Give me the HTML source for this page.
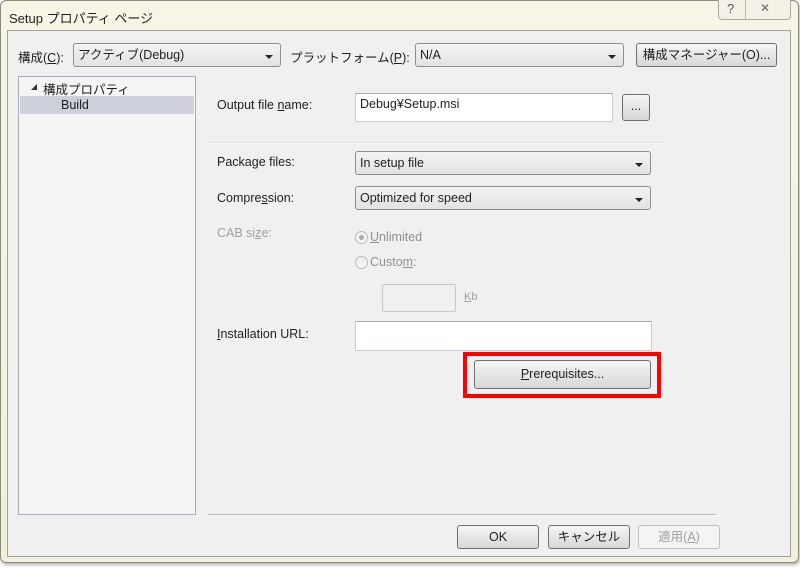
<!DOCTYPE html>
<html><head><meta charset="utf-8"><style>
*{box-sizing:border-box;margin:0;padding:0}
body{width:800px;height:568px;background:#fff;position:relative;overflow:hidden;font-family:"Liberation Sans","Noto Sans CJK JP",sans-serif;font-size:12.5px;color:#1e1e1e}
.a{position:absolute}
.frame{left:0;top:0;width:799px;height:563px;border:1px solid #8a8a80;border-radius:6px;background:linear-gradient(#f7f5e6,#f2f0dc);box-shadow:1px 2px 3px rgba(0,0,0,.3)}
.panel{left:7px;top:30px;width:784px;height:527px;background:#f0f0f0;border:1px solid #a0a0a0}
.combo{background:linear-gradient(#f4f4f4,#e2e2e2);border:1px solid #8e8e8e;border-radius:3px;padding:3px 4px;line-height:16px}
.combo:after{content:"";position:absolute;right:7px;top:11px;border-left:4px solid transparent;border-right:4px solid transparent;border-top:4px solid #222}
.btn{background:linear-gradient(#f6f6f6 0%,#e6e6e6 50%,#d8d8d8 100%);border:1px solid #707070;border-radius:3px;text-align:center;line-height:22px}
.tb{background:#fff;border:1px solid #c8cdd4;border-top-color:#abadb3;padding:5px 4px}
.gray{color:#a0a0a0}
u{text-decoration:underline}
.radio{width:13px;height:13px;border-radius:50%;border:1px solid #bbb;background:linear-gradient(#eee,#f8f8f8)}
</style></head><body>
<div class="a frame"></div>
<div class="a" style="left:9px;top:8px;font-size:13px">Setup プロパティ ページ</div>
<div class="a" style="left:718px;top:0;width:73px;height:20px;border:1px solid #a8a8a0;border-top:none;border-radius:0 0 4px 4px;background:#f4f2e6"></div>
<div class="a" style="left:745px;top:0;width:1px;height:20px;background:#b8b8b0"></div>
<div class="a" style="left:727px;top:1px;font-size:13px;color:#555">?</div>
<div class="a" style="left:760px;top:1px;font-size:12px;color:#666">✕</div>
<div class="a panel"></div>

<div class="a" style="left:18px;top:47px">構成(<u>C</u>):</div>
<div class="a combo" style="left:73px;top:43px;width:208px;height:24px">アクティブ(Debug)</div>
<div class="a" style="left:290px;top:47px">プラットフォーム(<u>P</u>):</div>
<div class="a combo" style="left:415px;top:43px;width:209px;height:24px">N/A</div>
<div class="a btn" style="left:636px;top:43px;width:141px;height:24px">構成マネージャー(O)...</div>

<div class="a" style="left:18px;top:76px;width:178px;height:439px;background:#f5f5f5;border:1px solid #a8acb4"></div>
<div class="a" style="left:31px;top:84px;width:0;height:0;border-left:6px solid transparent;border-bottom:6px solid #333"></div>
<div class="a" style="left:43px;top:79px">構成プロパティ</div>
<div class="a" style="left:20px;top:96px;width:174px;height:18px;background:#cdd0da"></div>
<div class="a" style="left:61px;top:98px">Build</div>

<div class="a" style="left:217px;top:98px">Output file <u>n</u>ame:</div>
<div class="a tb" style="left:355px;top:93px;width:258px;height:29px;padding-top:3px">Debug¥Setup.msi</div>
<div class="a btn" style="left:622px;top:94px;width:28px;height:27px;line-height:22px">...</div>
<div class="a" style="left:208px;top:142px;width:455px;height:2px;background:#fafafa;border-top:1px solid #e2e2e2"></div>

<div class="a" style="left:217px;top:155px">Package files:</div>
<div class="a combo" style="left:355px;top:151px;width:296px;height:24px">In setup file</div>
<div class="a" style="left:217px;top:191px">Compre<u>s</u>sion:</div>
<div class="a combo" style="left:355px;top:186px;width:296px;height:24px">Optimized for speed</div>
<div class="a gray" style="left:217px;top:226px">CAB si<u>z</u>e:</div>
<div class="a radio" style="left:355px;top:231px"></div>
<div class="a" style="left:359px;top:235px;width:5px;height:5px;border-radius:50%;background:#aaa"></div>
<div class="a gray" style="left:370px;top:230px;color:#909090"><u>U</u>nlimited</div>
<div class="a radio" style="left:355px;top:256px"></div>
<div class="a gray" style="left:370px;top:255px;color:#909090">Custo<u>m</u>:</div>
<div class="a" style="left:382px;top:284px;width:74px;height:28px;border:1px solid #c8c8c8;background:#f0f0f0;border-radius:2px"></div>
<div class="a gray" style="left:464px;top:291px;font-size:11px"><u>K</u>b</div>

<div class="a" style="left:217px;top:327px"><u>I</u>nstallation URL:</div>
<div class="a tb" style="left:355px;top:321px;width:297px;height:30px"></div>
<div class="a" style="left:463px;top:352px;width:198px;height:46px;border:4px solid #ff0000"></div>
<div class="a btn" style="left:474px;top:360px;width:177px;height:29px;line-height:27px"><u>P</u>rerequisites...</div>

<div class="a" style="left:208px;top:514px;width:508px;height:2px;background:#fafafa;border-top:1px solid #b8b8b8"></div>
<div class="a btn" style="left:457px;top:525px;width:82px;height:24px">OK</div>
<div class="a btn" style="left:548px;top:525px;width:82px;height:24px">キャンセル</div>
<div class="a btn gray" style="left:638px;top:525px;width:82px;height:24px;background:#f4f4f4;border-color:#c0c0c0">適用(<u>A</u>)</div>
</body></html>
